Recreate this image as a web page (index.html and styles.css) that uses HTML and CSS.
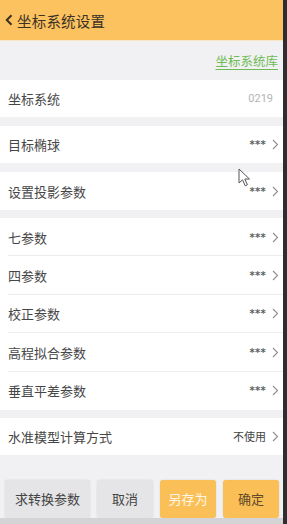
FILE: index.html
```html
<!DOCTYPE html>
<html lang="zh">
<head>
<meta charset="utf-8">
<title>坐标系统设置</title>
<link rel="stylesheet" href="styles.css">
</head>
<body>
<div class="frame">
  <div class="screen">
    <header class="topbar">
      <svg class="back" width="8" height="12" viewBox="0 0 8 12"><path d="M6.5 1.2 L1.8 6 L6.5 10.8" fill="none" stroke="#3a3020" stroke-width="2"/></svg>
      <span class="title">坐标系统设置</span>
    </header>
    <div class="libbar"><span class="link">坐标系统库</span></div>

    <div class="row h37"><span class="label">坐标系统</span><span class="value light">0219</span></div>
    <div class="gap g9"></div>
    <div class="row h37"><span class="label">目标椭球</span><span class="value"><span class="stars">***</span><svg class="chev" width="7" height="11" viewBox="0 0 7 11"><path d="M1 1 L5.5 5.5 L1 10" fill="none" stroke="#8d8d8d" stroke-width="1.1"/></svg></span></div>
    <div class="gap g9"></div>
    <div class="row h38"><span class="label">设置投影参数</span><span class="value"><span class="stars">***</span><svg class="chev" width="7" height="11" viewBox="0 0 7 11"><path d="M1 1 L5.5 5.5 L1 10" fill="none" stroke="#8d8d8d" stroke-width="1.1"/></svg></span></div>
    <div class="gap g8"></div>

    <div class="group">
      <div class="row grow sep"><span class="label">七参数</span><span class="value"><span class="stars">***</span><svg class="chev" width="7" height="11" viewBox="0 0 7 11"><path d="M1 1 L5.5 5.5 L1 10" fill="none" stroke="#8d8d8d" stroke-width="1.1"/></svg></span></div>
      <div class="row grow sep"><span class="label">四参数</span><span class="value"><span class="stars">***</span><svg class="chev" width="7" height="11" viewBox="0 0 7 11"><path d="M1 1 L5.5 5.5 L1 10" fill="none" stroke="#8d8d8d" stroke-width="1.1"/></svg></span></div>
      <div class="row grow sep"><span class="label">校正参数</span><span class="value"><span class="stars">***</span><svg class="chev" width="7" height="11" viewBox="0 0 7 11"><path d="M1 1 L5.5 5.5 L1 10" fill="none" stroke="#8d8d8d" stroke-width="1.1"/></svg></span></div>
      <div class="row grow sep"><span class="label">高程拟合参数</span><span class="value"><span class="stars">***</span><svg class="chev" width="7" height="11" viewBox="0 0 7 11"><path d="M1 1 L5.5 5.5 L1 10" fill="none" stroke="#8d8d8d" stroke-width="1.1"/></svg></span></div>
      <div class="row grow"><span class="label">垂直平差参数</span><span class="value"><span class="stars">***</span><svg class="chev" width="7" height="11" viewBox="0 0 7 11"><path d="M1 1 L5.5 5.5 L1 10" fill="none" stroke="#8d8d8d" stroke-width="1.1"/></svg></span></div>
    </div>
    <div class="gap g8"></div>
    <div class="row h37"><span class="label">水准模型计算方式</span><span class="value"><span class="txt">不使用</span><svg class="chev" width="7" height="11" viewBox="0 0 7 11"><path d="M1 1 L5.5 5.5 L1 10" fill="none" stroke="#8d8d8d" stroke-width="1.1"/></svg></span></div>
    <div class="gap g25"></div>

    <div class="buttons">
      <div class="btn gray wide">求转换参数</div>
      <div class="btn gray">取消</div>
      <div class="btn orange light-text">另存为</div>
      <div class="btn orange">确定</div>
    </div>
    <div class="bottom"></div>

    <svg class="cursor" width="14" height="20" viewBox="0 0 14 20"><path d="M1 1 L1 15 L4.5 11.8 L7.2 17.8 L9.4 16.8 L6.8 11 L11.5 11 Z" fill="#fff" stroke="#555" stroke-width="1"/></svg>
  </div>
  <div class="edge"></div>
</div>
</body>
</html>
```

FILE: styles.css
```css
* { box-sizing: border-box; }
html, body { margin: 0; padding: 0; }
body {
  width: 287px;
  height: 524px;
  overflow: hidden;
  font-family: "Noto Sans CJK SC", "Noto Sans", sans-serif;
  background: #f1f1f3;
}
.frame {
  display: flex;
  width: 287px;
  height: 524px;
}
.screen {
  position: relative;
  width: 283px;
  height: 524px;
  display: flex;
  flex-direction: column;
  background: #f1f1f3;
}
.edge {
  width: 4px;
  height: 524px;
  background: #2e2e30;
}
.topbar {
  height: 40px;
  background: #fdc260;
  display: flex;
  align-items: center;
  padding-left: 5px;
  gap: 4px;
}
.title {
  font-size: 14.5px;
  color: #3a3226;
  letter-spacing: 0.2px;
}
.libbar {
  height: 40px;
  display: flex;
  align-items: center;
  justify-content: flex-end;
  padding-right: 5px;
  border-top: 1px solid #f7e6c8;
}
.link {
  font-size: 12.5px;
  color: #6dbb52;
  text-decoration: underline;
  text-underline-offset: 3px;
}
.row {
  background: #fff;
  display: flex;
  align-items: center;
  justify-content: space-between;
  padding: 0 4px 0 8px;
  position: relative;
}
.h37 { height: 37px; }
.h38 { height: 38px; }
.grow { height: 38.4px; }
.sep::after {
  content: "";
  position: absolute;
  left: 8px;
  right: 0;
  bottom: 0;
  height: 1px;
  background: #ededed;
}
.label {
  font-size: 13px;
  color: #464646;
}
.value {
  display: flex;
  align-items: center;
  gap: 6px;
  color: #555;
}
.value.light {
  font-size: 11px;
  color: #b4b4b4;
  font-family: "Roboto", "Noto Sans", sans-serif;
  padding-right: 6px;
}
.stars {
  font-size: 10px;
  font-weight: bold;
  color: #5e5e5e;
  letter-spacing: 0.3px;
  font-family: "DejaVu Sans", sans-serif;
}
.txt {
  font-size: 11px;
  color: #444;
}
.chev { display: block; }
.gap { background: #f1f1f3; }
.g8 { height: 8px; }
.g9 { height: 9px; }
.g25 { height: 25px; }
.group { display: flex; flex-direction: column; }
.buttons {
  height: 38px;
  display: flex;
  gap: 7px;
  padding-left: 5px;
}
.btn {
  width: 56px;
  height: 38px;
  border-radius: 3px;
  display: flex;
  align-items: center;
  justify-content: center;
  font-size: 13px;
  color: #444;
  box-shadow: 0 0 2px rgba(0,0,0,0.12);
}
.btn.wide { width: 85px; }
.btn.gray { background: #e5e5e7; }
.btn.orange { background: #fbbf57; color: #5e4a28; }
.btn.light-text { color: #fff7e6; }
.bottom {
  height: 6px;
  background: #d4d4d6;
}
.cursor {
  position: absolute;
  left: 238px;
  top: 168px;
}
```
